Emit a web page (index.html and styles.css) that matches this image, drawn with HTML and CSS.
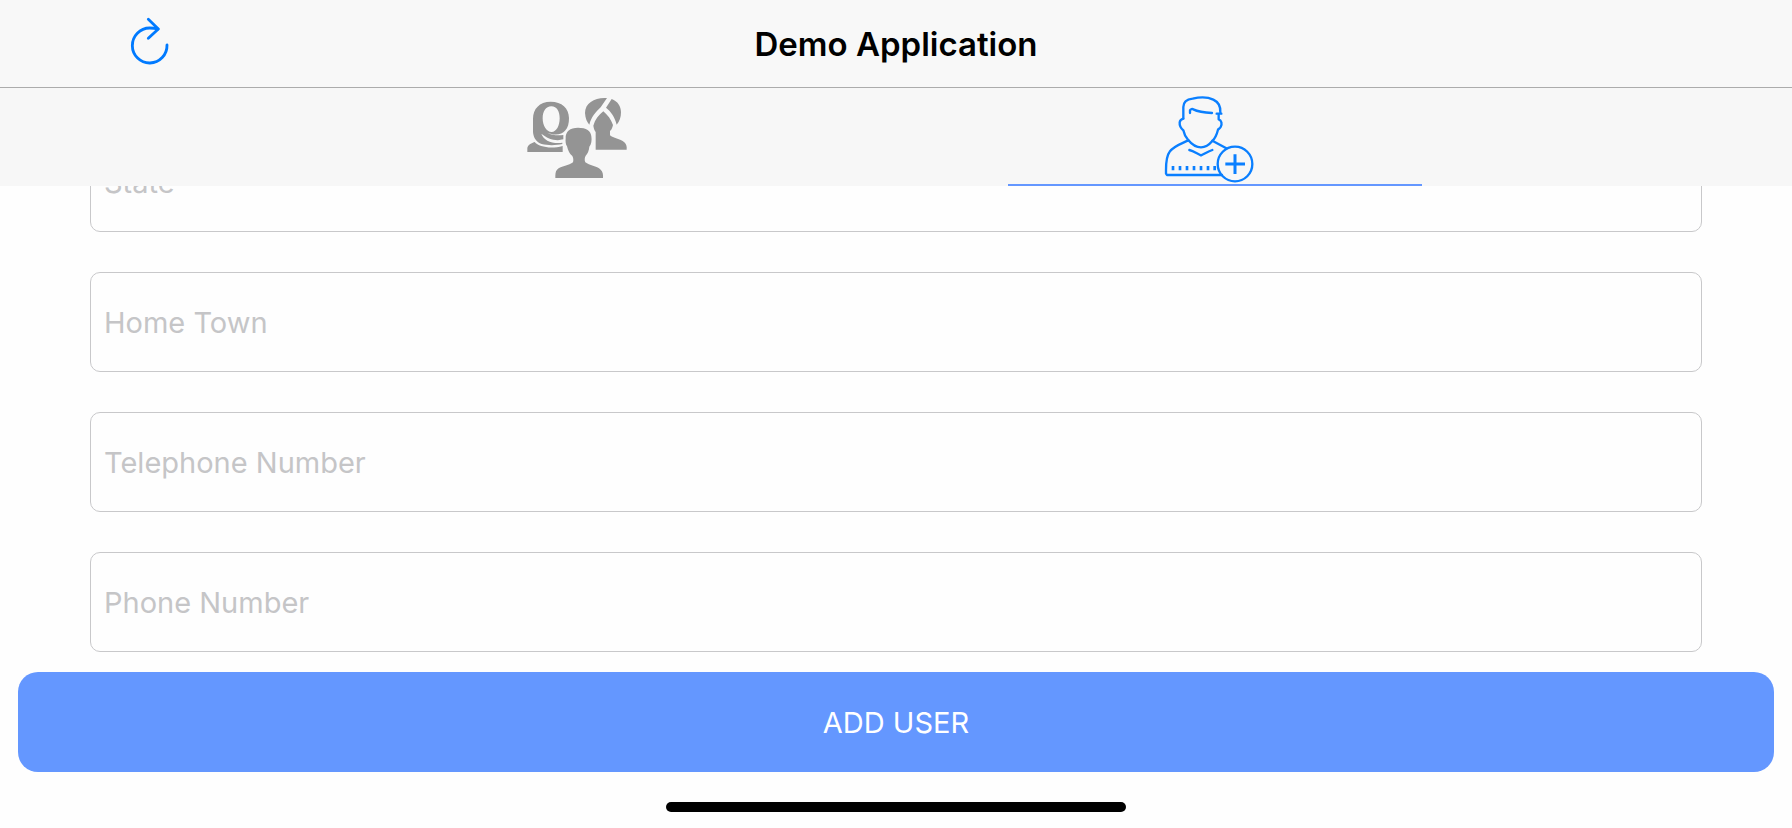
FILE: index.html
```html
<!DOCTYPE html>
<html lang="en">
<head>
<meta charset="utf-8">
<meta name="viewport" content="width=device-width, initial-scale=1">
<title>Demo Application</title>
<link rel="stylesheet" href="styles.css">
</head>
<body>
<header class="navbar">
  <button class="refresh" type="button" aria-label="Refresh">
    <svg width="40" height="56" viewBox="60 33 120 168" fill="none" stroke="currentColor" stroke-width="8.500" stroke-linecap="round" stroke-linejoin="round">
      <path d="M171 120A52 52.500 0 1 1 119 69Q132 69 144 72"/>
      <path d="M115 43L145 72L115 100"/>
    </svg>
  </button>
  <h1 class="title">Demo Application</h1>
</header>
<nav class="tabs">
  <button class="tab tab-users" type="button" aria-label="Users">
    <svg width="130" height="96" viewBox="6 9 390 288" fill="currentColor">
      <path fill-rule="evenodd" d="M122 50C88 50 69 72 69 101V141C70 158 80 173 95 177C115 182 139 181 157 177V173C127 177 101 167 94 146C112 161 137 170 160 163V150C143 152 126 151 112 143C134 152 156 149 165 137C174 128 177 115 177 99C176 69 156 50 122 50ZM124 64C141 64 149 80 149 100C149 123 139 141 125 141C109 141 98 122 98 100C98 79 107 64 124 64Z"/>
      <path d="M52 201V190C53 181 62 175 74 171C86 185 121 193 158 183V201Z"/>
      <path d="M204 128C180 128 166 140 167 160C166 169 167 179 171 184C174 196 179 208 187 213C190 219 191 225 189 232C178 242 153 243 141 254C136 259 136 268 136 279H279C280 268 278 259 272 254C260 243 238 241 226 232C223 225 224 217 227 212C233 206 237 196 238 185C244 179 246 166 244 154C243 138 229 128 204 128Z"/>
      <path d="M291 39C257 36 225 52 225 84C226 100 231 112 238 119C243 97 258 80 272 67Z"/>
      <path d="M305 42L288 68C302 78 315 97 320 119C329 110 333 96 333 82C333 63 323 49 305 42Z"/>
      <path d="M280 79C266 90 255 104 250 122C252 132 253 136 257 141V194H350C351 184 349 178 343 172C331 161 309 159 300 151V138C306 134 307 127 309 120C303 103 293 90 280 79Z"/>
    </svg>
  </button>
  <button class="tab tab-add tab-active" type="button" aria-label="Add user" aria-current="page">
    <svg width="120" height="96" viewBox="15 9 360 288" fill="none" stroke="currentColor" stroke-width="7" stroke-linecap="round" stroke-linejoin="round">
      <path d="M100 100V66C100 50 113 43 128 41C148 36 174 36 190 44C205 51 212 66 211 82"/>
      <path d="M200 86H214M206 88V103C215 106 217 118 212 126C210 130 207 131 204 134C201 146 195 160 187 168C176 181 165 187 153 187C140 187 127 180 114 164C107 156 102 147 100 136C92 129 88 123 89 112C90 106 94 103 100 101"/>
      <path d="M120 84V76C122 72 127 71 130 73C148 82 167 83 186 84"/>
      <path d="M115 166C94 176 71 183 59 200C48 214 48 235 48 255V266L51 270H216M187 167L229 190"/>
      <path d="M118 195C130 198 140 205 153 211C163 207 174 199 187 195"/>
      <path stroke-linecap="butt" stroke-width="8" d="M69 243V256M90 243V256M111 243V256M132 243V256M153 243V256M174 243V256M194 243V256"/>
      <circle cx="255" cy="237" r="52"/>
      <path stroke-linecap="butt" stroke-width="9" d="M226 237H285M255 208V267"/>
    </svg>
  </button>
</nav>
<main class="content">
  <form class="fields" id="user-form">
    <input class="field" type="text" placeholder="State" aria-label="State">
    <input class="field" type="text" placeholder="Home Town" aria-label="Home Town">
    <input class="field" type="tel" placeholder="Telephone Number" aria-label="Telephone Number">
    <input class="field" type="tel" placeholder="Phone Number" aria-label="Phone Number">
  </form>
</main>
<footer class="footer">
  <button class="submit" type="submit" form="user-form">ADD USER</button>
  <div class="home-indicator"></div>
</footer>
</body>
</html>
```
FILE: styles.css
```css
* {
  box-sizing: border-box;
}

body {
  margin: 0;
  height: 100vh;
  display: flex;
  flex-direction: column;
  background: #fefefe;
  font-family: Inter, "Liberation Sans", sans-serif;
}

button {
  margin: 0;
  padding: 0;
  border: 0;
  background: none;
  font: inherit;
}

svg {
  display: block;
}

.navbar {
  display: grid;
  grid-template-columns: 1fr auto 1fr;
  align-items: center;
  padding: 16px 130px 15px;
  background: #f8f8f8;
  border-bottom: 1px solid #acacac;
}

.refresh {
  justify-self: start;
  color: #007aff;
}

.title {
  margin: 0;
  font-size: 33px;
  line-height: 40px;
  font-weight: 600;
  color: #000;
}

.tabs {
  display: grid;
  grid-template-columns: 185fr 207fr 112fr 207fr 185fr;
  background: #f7f7f7;
}

.tab {
  display: flex;
  justify-content: center;
  border-bottom: 2px solid transparent;
  color: #949494;
}

.tab-users {
  grid-column: 2;
}

.tab-add {
  grid-column: 4;
}

.tab-active {
  color: #0a7fff;
  border-bottom-color: #6497ff;
}

.content {
  flex: 1;
  min-height: 0;
  overflow: hidden;
  display: flex;
  flex-direction: column;
  justify-content: flex-end;
  padding: 0 90px 20px;
}

.fields {
  display: flex;
  flex-direction: column;
  gap: 40px;
}

.field {
  width: 100%;
  height: 100px;
  padding: 0 13px;
  border: 1px solid #c8c8ca;
  border-radius: 10px;
  background: #fefefe;
  font-family: inherit;
  font-size: 29px;
  color: #000;
}

.field::placeholder {
  color: #c5c5c7;
  opacity: 1;
}

.footer {
  display: flex;
  flex-direction: column;
  align-items: center;
  gap: 30px;
  padding: 0 18px 16px;
}

.submit {
  width: 100%;
  height: 100px;
  border-radius: 20px;
  background: #6497ff;
  color: #fff;
  font-size: 29px;
}

.home-indicator {
  width: 460px;
  height: 10px;
  border-radius: 5px;
  background: #000;
}
```
